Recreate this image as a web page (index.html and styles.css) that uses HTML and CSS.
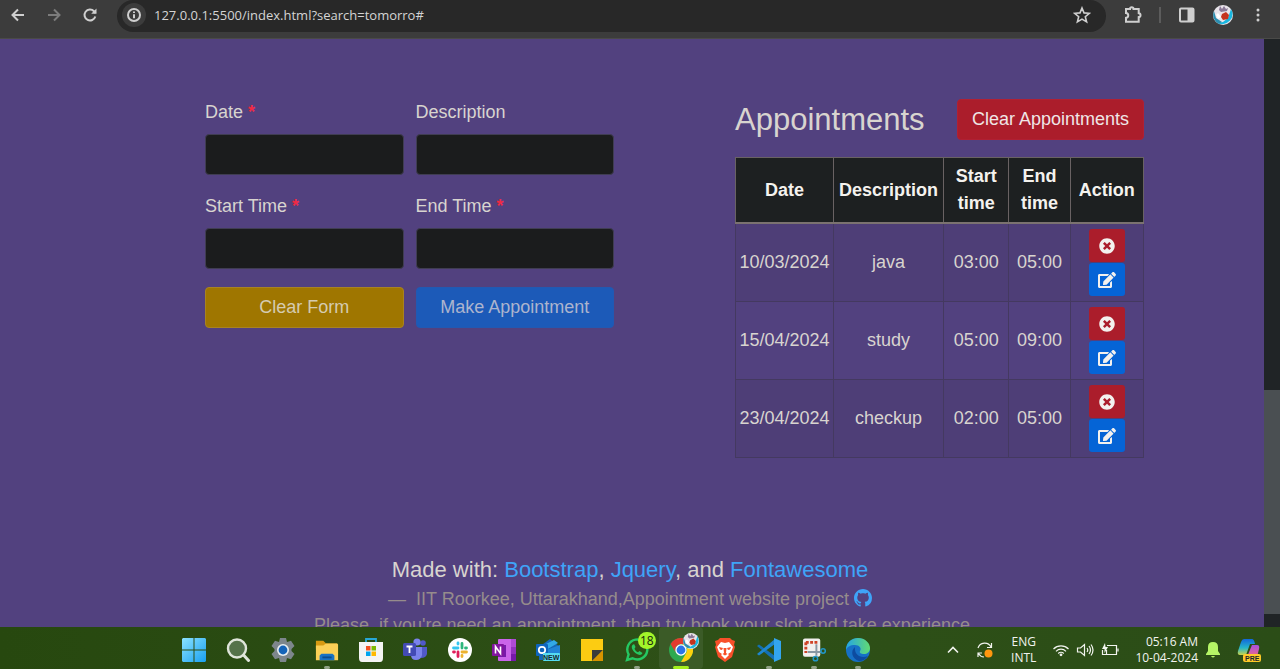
FILE: index.html
```html
<!DOCTYPE html>
<html lang="en">
<head>
<meta charset="utf-8">
<meta name="viewport" content="width=device-width, initial-scale=1">
<title>Appointments</title>
<link rel="stylesheet" href="styles.css">
</head>
<body>
<svg class="defs" aria-hidden="true">
  <symbol id="i-x" viewBox="0 0 512 512"><path fill="currentColor" d="M256 8C119 8 8 119 8 256s111 248 248 248 248-111 248-248S393 8 256 8zm121.600 313.100c4.700 4.700 4.700 12.300 0 17L338 377.600c-4.700 4.700-12.300 4.700-17 0L256 312l-65.100 65.600c-4.700 4.700-12.300 4.700-17 0L134.400 338c-4.700-4.700-4.700-12.300 0-17l65.600-65-65.600-65.100c-4.700-4.700-4.700-12.300 0-17l39.600-39.600c4.700-4.700 12.300-4.700 17 0l65 65.700 65.100-65.600c4.700-4.700 12.300-4.700 17 0l39.600 39.600c4.700 4.700 4.700 12.300 0 17L312 256l65.600 65.100z"/></symbol>
  <symbol id="i-edit" viewBox="0 0 576 512"><path fill="currentColor" d="M402.600 83.200l90.200 90.200c3.800 3.800 3.800 10 0 13.800L274.400 405.600l-92.800 10.300c-12.400 1.400-22.900-9.100-21.500-21.500l10.300-92.800L388.800 83.200c3.800-3.800 10-3.800 13.800 0zm162-22.900l-48.800-48.800c-15.200-15.200-39.900-15.200-55.200 0l-35.400 35.400c-3.800 3.800-3.800 10 0 13.800l90.200 90.200c3.800 3.800 10 3.800 13.800 0l35.400-35.400c15.200-15.300 15.200-40 0-55.200zM384 346.200V448H64V128h229.800c3.200 0 6.200-1.300 8.500-3.500l40-40c7.600-7.600 2.200-20.500-8.500-20.500H48C21.500 64 0 85.500 0 112v352c0 26.500 21.500 48 48 48h352c26.500 0 48-21.500 48-48V306.200c0-10.700-12.900-16-20.500-8.500l-40 40c-2.200 2.300-3.500 5.300-3.500 8.500z"/></symbol>
  <symbol id="i-avatar" viewBox="0 0 20 20"><circle cx="10" cy="10" r="10" fill="#e9e4ea"/><path d="M18 4a10 10 0 0 1-13 14l5-1 5-4z" fill="#18b7e0"/><path d="M1 6a10 10 0 0 0 5 13l3-2-6-4z" fill="#2b8eb0"/><path d="M4 3l2 2 1-4 2 3 2-3 2 3 2-1-1 3-6 1z" fill="#8a7896"/><path d="M9 9l4-2 3 3-1 4-5 1-2-3z" fill="#c4331f"/><path d="M5 8l3 4-3 2-2-4z" fill="#fff"/></symbol>
</svg>

<header class="chrome">
  <nav class="chrome-nav">
    <button class="icon-btn" aria-label="Back"><svg viewBox="0 0 16 16" width="16" height="16"><path d="M14 8H3M8 2.500 2.500 8 8 13.500" class="ln"/></svg></button>
    <button class="icon-btn dim" aria-label="Forward"><svg viewBox="0 0 16 16" width="16" height="16"><path d="M2 8h11M8 2.500 13.500 8 8 13.500" class="ln"/></svg></button>
    <button class="icon-btn" aria-label="Reload"><svg viewBox="0 0 16 16" width="16" height="16"><path d="M13.300 9.500A5.500 5.500 0 1 1 12 4.200L13.500 6" class="ln"/><path d="M14.500 1.500v5.300H9.200z" fill="currentColor"/></svg></button>
  </nav>
  <div class="omnibox">
    <button class="info" aria-label="Site information"><svg viewBox="0 0 16 16" width="16" height="16"><circle cx="8" cy="8" r="6" class="ln"/><path d="M8 7.200v4M8 4.400v1.600" class="ln"/></svg></button>
    <input class="url" type="text" aria-label="Address" value="127.0.0.1:5500/index.html?search=tomorro#">
    <button class="icon-btn" aria-label="Bookmark"><svg viewBox="0 0 18 18" width="18" height="18"><path d="M9 2l2 4.900 5.300.4-4 3.400 1.300 5.200L9 13.100l-4.600 2.800 1.300-5.200-4-3.400L7 6.900z" class="ln thin"/></svg></button>
  </div>
  <div class="chrome-tools">
    <button class="icon-btn" aria-label="Extensions"><svg viewBox="0 0 18 18" width="18" height="18"><path d="M2 3h4c0-2.200 3.500-2.200 3.500 0h5.200v4.200c2.400.2 2.400 3.700 0 3.900v4.700H2v-4c3-.4 3-4.400 0-4.800z" class="ln"/></svg></button>
    <span class="divider"></span>
    <button class="icon-btn" aria-label="Side panel"><svg viewBox="0 0 18 18" width="18" height="18"><rect x="2" y="2.500" width="13.500" height="13" rx="1" class="ln"/><path d="M9.500 2.500h6v13h-6z" fill="currentColor"/></svg></button>
    <button class="icon-btn" aria-label="Profile"><svg width="20" height="20"><use href="#i-avatar"/></svg></button>
    <button class="icon-btn menu" aria-label="Menu"><svg viewBox="0 0 4 16" width="4" height="16" fill="currentColor"><circle cx="2" cy="3" r="1.500"/><circle cx="2" cy="8" r="1.500"/><circle cx="2" cy="13" r="1.500"/></svg></button>
  </div>
</header>

<div class="viewport">
  <div class="page">
    <main class="columns">
      <form class="form">
        <div class="field"><label for="date">Date <span class="req">*</span></label><input id="date" type="text"></div>
        <div class="field"><label for="desc">Description</label><input id="desc" type="text"></div>
        <div class="field"><label for="start">Start Time <span class="req">*</span></label><input id="start" type="text"></div>
        <div class="field"><label for="end">End Time <span class="req">*</span></label><input id="end" type="text"></div>
        <button type="reset" class="btn btn-warning">Clear Form</button>
        <button type="button" class="btn btn-primary">Make Appointment</button>
      </form>
      <section>
        <div class="list-head">
          <h2>Appointments</h2>
          <button class="btn btn-danger">Clear Appointments</button>
        </div>
        <table class="table">
          <colgroup><col class="c-date"><col class="c-desc"><col class="c-start"><col class="c-end"><col class="c-act"></colgroup>
          <thead><tr><th>Date</th><th>Description</th><th>Start time</th><th>End time</th><th>Action</th></tr></thead>
          <tbody>
            <tr><td>10/03/2024</td><td>java</td><td>03:00</td><td>05:00</td><td><div class="actions"><button class="act del" aria-label="Delete"><svg width="16" height="16"><use href="#i-x"/></svg></button><button class="act edit" aria-label="Edit"><svg width="18" height="16"><use href="#i-edit"/></svg></button></div></td></tr>
            <tr><td>15/04/2024</td><td>study</td><td>05:00</td><td>09:00</td><td><div class="actions"><button class="act del" aria-label="Delete"><svg width="16" height="16"><use href="#i-x"/></svg></button><button class="act edit" aria-label="Edit"><svg width="18" height="16"><use href="#i-edit"/></svg></button></div></td></tr>
            <tr><td>23/04/2024</td><td>checkup</td><td>02:00</td><td>05:00</td><td><div class="actions"><button class="act del" aria-label="Delete"><svg width="16" height="16"><use href="#i-x"/></svg></button><button class="act edit" aria-label="Edit"><svg width="18" height="16"><use href="#i-edit"/></svg></button></div></td></tr>
          </tbody>
        </table>
      </section>
    </main>
    <footer class="credits">
      <p class="made">Made with: <a href="#">Bootstrap</a>, <a href="#">Jquery</a>, and <a href="#">Fontawesome</a></p>
      <p class="source">—&nbsp; IIT Roorkee, Uttarakhand,Appointment website project <a href="#" aria-label="GitHub"><svg class="gh" viewBox="0 0 16 16" width="18" height="18"><path fill="currentColor" d="M8 0C3.580 0 0 3.580 0 8c0 3.540 2.290 6.530 5.470 7.590.4.070.55-.17.55-.38 0-.19-.01-.82-.01-1.490-2.010.37-2.530-.49-2.690-.94-.09-.23-.48-.94-.82-1.130-.28-.15-.68-.52-.01-.53.63-.01 1.080.58 1.230.82.72 1.210 1.870.87 2.330.66.070-.52.28-.87.51-1.070-1.780-.2-3.640-.89-3.640-3.950 0-.87.31-1.590.82-2.150-.08-.2-.36-1.020.08-2.120 0 0 .67-.21 2.200.82.64-.18 1.320-.27 2-.27s1.360.09 2 .27c1.530-1.040 2.200-.82 2.200-.82.44 1.100.16 1.920.08 2.120.51.56.82 1.270.82 2.150 0 3.070-1.870 3.750-3.650 3.950.29.25.54.73.54 1.480 0 1.070-.01 1.930-.01 2.200 0 .21.15.46.55.38A8 8 0 0 0 16 8c0-4.420-3.580-8-8-8z"/></svg></a></p>
      <p class="source note">Please, if you're need an appointment, then try book your slot and take experience</p>
    </footer>
  </div>
  <div class="scroll"><div class="thumb"></div></div>
</div>

<footer class="taskbar">
  <nav class="apps">
    <button class="app" aria-label="Start"><svg viewBox="0 0 24 24"><defs><linearGradient id="g-win" x2="1" y2="1"><stop stop-color="#8be3ff"/><stop offset="1" stop-color="#189ff0"/></linearGradient></defs><path fill="url(#g-win)" d="M1 0h10.500v11.500H0V1zM12.500 0H23l1 1v10.500H12.500zM0 12.500h11.500V24H1l-1-1zM12.500 12.500H24V23l-1 1H12.500z"/></svg></button>
    <button class="app" aria-label="Search"><svg viewBox="0 0 24 24"><circle cx="11" cy="10.500" r="9" fill="#55724a" stroke="#dfe5da" stroke-width="2.400"/><path d="M17.500 17l5 5.500" stroke="#dfe5da" stroke-width="3" stroke-linecap="round"/></svg></button>
    <button class="app" aria-label="Settings"><svg viewBox="0 0 24 24"><path fill="#7d868c" d="M9 0h6l1 4 4-1.200 3.500 5.200-3 3v2l3 3L20 21.200 16 20l-1 4H9l-1-4-4 1.200L.5 16l3-3v-2l-3-3L4 2.800 8 4z"/><circle cx="12" cy="12" r="6" fill="#e8eef2"/><circle cx="12" cy="12" r="4.400" fill="#1463b8"/></svg></button>
    <button class="app open" aria-label="File Explorer"><svg viewBox="0 0 26 24"><path fill="#d79a12" d="M1 2h8l3 3h12v6H1z"/><path fill="#fbd057" d="M1 7h8l3-2h12l1 1v17H1z"/><path fill="#1a73c4" d="M5 23v-5l2-2h12l2 2v5z"/><path d="M8 20h10" stroke="#0b4d8e" stroke-width="2"/></svg></button>
    <button class="app" aria-label="Store"><svg viewBox="0 0 24 24"><path d="M7 6V1h10v5" fill="none" stroke="#27a8d8" stroke-width="1.800"/><path fill="#f4f4f4" d="M0 4h24v16q0 4-3 4H3q-3 0-3-4z"/><path fill="#f25022" d="M7 8h4.500v4.500H7z"/><path fill="#7fba00" d="M12.500 8H17v4.500h-4.500z"/><path fill="#00a4ef" d="M7 13.500h4.500V18H7z"/><path fill="#ffb900" d="M12.500 13.500H17V18h-4.500z"/></svg></button>
    <button class="app" aria-label="Teams"><svg viewBox="0 0 24 24"><circle cx="20" cy="5" r="2.800" fill="#5059c9"/><circle cx="14" cy="4" r="3.600" fill="#7b83eb"/><path fill="#5059c9" d="M16 9h8v7q-1 4-6 4z"/><path fill="#7b83eb" d="M8 9h11v8q-1 5-6 5t-5-5z"/><rect y="5" width="13" height="13" rx="1.500" fill="#434bb4"/><path d="M3.500 8.500h6M6.500 8.500v6.500" stroke="#fff" stroke-width="1.800"/></svg></button>
    <button class="app" aria-label="Slack"><svg viewBox="0 0 24 24"><circle cx="12" cy="12" r="12" fill="#fff"/><g stroke-width="2.800" stroke-linecap="round"><path stroke="#36c5f0" d="M5.500 10h4.500M10 5v1"/><path stroke="#2eb67d" d="M14 5.500V10M18.500 10h-1"/><path stroke="#ecb22e" d="M14 14h4.500M14 18.500v-1"/><path stroke="#e01e5a" d="M10 14v4.500M5.500 14h1"/></g></svg></button>
    <button class="app" aria-label="OneNote"><svg viewBox="0 0 24 24"><rect x="6" y="1" width="18" height="22" rx="1" fill="#ca64ea"/><path fill="#ae4bd5" d="M19 1h5v8h-5z"/><path fill="#9332bf" d="M19 9h5v7h-5z"/><path fill="#7719aa" d="M19 16h5v7h-5zM6 7h8v12H6z"/><rect y="6" width="12" height="12" rx="1" fill="#80169f"/><path d="M3.500 15.500v-7l5 7v-7" fill="none" stroke="#fff" stroke-width="1.600"/></svg></button>
    <button class="app" aria-label="Outlook"><svg viewBox="0 0 24 24"><path fill="#1667b7" d="M3 9L14 1l10 8v13H3z"/><path fill="#32a9e7" d="M8 7l10-5 4 3-12 7z"/><path fill="#2184d6" d="M10 12l14-5v14H8z"/><rect y="6" width="12" height="12" rx="1" fill="#0f65bd"/><circle cx="6" cy="12" r="3.200" fill="none" stroke="#fff" stroke-width="1.700"/><rect x="7" y="15" width="17" height="8" rx="1" fill="#55dcf2"/><text x="7" y="22" class="tag">NEW</text></svg></button>
    <button class="app" aria-label="Sticky Notes"><svg viewBox="0 0 24 24"><path fill="#fccc12" d="M1 1h22v11L12 23H1z"/><path fill="#3b3b3b" d="M12 12h11L12 23z"/><path fill="#d79400" d="M23 12v11H12z"/></svg></button>
    <button class="app open" aria-label="WhatsApp"><svg viewBox="0 0 24 24"><path d="M2 22l1.600-5.600a10 10 0 1 1 4 3.900z" fill="none" stroke="#25c862" stroke-width="2.400"/><path fill="#25c862" d="M8 6.500c-3 2 0 7 3 9s5.500 2 6.500-.5l-3-2-1.500 1.300c-1.500-.5-3-2-3.500-3.500L10.500 9 9.200 6.300z"/></svg><span class="badge">18</span></button>
    <button class="app open active" aria-label="Chrome"><svg viewBox="0 0 24 24"><circle cx="12" cy="12" r="12" fill="#2da94f"/><path fill="#e33b2e" d="M1.600 6A12 12 0 0 1 22.400 6H12a6 6 0 0 0-5 9z"/><path fill="#fdd10d" d="M22.400 6A12 12 0 0 1 12 24l5.200-9A6 6 0 0 0 12 6z"/><circle cx="12" cy="12" r="5.700" fill="#fff"/><circle cx="12" cy="12" r="4.400" fill="#2b74e8"/></svg><svg class="mini"><use href="#i-avatar"/></svg></button>
    <button class="app" aria-label="Brave"><svg viewBox="0 0 24 24"><path fill="#f8502a" d="M7 0h10l2 2 3 1-1 4 1 2-3 10-7 5-7-5L2 9l1-2-1-4 3-1z"/><path fill="#fff" d="M8 4l4 1 4-1 4 5-2 5-3 2 1 1-4 4-4-4 1-1-3-2-2-5z"/><path fill="#f8502a" d="M6 9l4 1-1 2-2-.5zM18 9l-4 1 1 2 2-.5zM10.500 10h3l-.5 5 1.500 1L12 17.500 9.500 16l1.500-1z"/></svg></button>
    <button class="app open" aria-label="Visual Studio Code"><svg viewBox="0 0 24 24"><path fill="#1470b3" d="M0 8l2-1.500L18 18v5z"/><path fill="#1f87d0" d="M0 16l2 1.500L18 6V1z"/><path fill="#33a5ef" d="M17 0l7 3v18l-7 3z"/></svg></button>
    <button class="app open" aria-label="Snipping Tool"><svg viewBox="0 0 25 24"><rect x="1" y="0" width="18" height="19" rx="2" fill="#f2f0ee"/><path d="M4 4h12M4 4v11" stroke="#cf4327" stroke-width="3" stroke-dasharray="3 1.500"/><path d="M15 6v12M6 14h14" stroke="#8997a3" stroke-width="2"/><circle cx="22" cy="13" r="2.300" fill="none" stroke="#2296c8" stroke-width="1.600"/><circle cx="14" cy="21" r="2.300" fill="none" stroke="#2296c8" stroke-width="1.600"/></svg></button>
    <button class="app open" aria-label="Edge"><svg viewBox="0 0 24 24"><defs><linearGradient id="g-edge" x2="1"><stop stop-color="#24a4e5"/><stop offset="1" stop-color="#62db72"/></linearGradient></defs><circle cx="12" cy="12" r="12" fill="#1670c6"/><path fill="url(#g-edge)" d="M0 12C0 4 6 0 12 0c7 0 12 5 12 10 0 4-3 6-6 6s-5-1-4-3c2-3-1-6-5-6-5 0-8 2-9 5z"/><path fill="#0d4ba0" d="M9 9c-5 4-3 12 4 14 4 0 7-2 9-5-7 3-14-1-13-9z"/></svg></button>
  </nav>
  <div class="tray">
    <button class="tray-btn" aria-label="Hidden icons"><svg viewBox="0 0 12 12" width="12" height="12"><path d="M1 8.500L6 3.500l5 5" class="ln thin"/></svg></button>
    <button class="tray-btn sync" aria-label="Updates"><svg viewBox="0 0 18 18" width="18" height="18"><path d="M2 7a7 7 0 0 1 13-1M15.500 2v4.500H11M8 16a7 7 0 0 1-5.500-3.500M2 16v-4h4" class="ln hair"/><circle cx="12.500" cy="12.500" r="4" fill="#ff970f"/></svg></button>
    <button class="tray-btn lang">ENG<br>INTL</button>
    <button class="tray-btn status" aria-label="Network, sound and battery">
      <svg viewBox="0 0 16 16" width="16" height="16"><path d="M.5 7a10.500 10.500 0 0 1 15 0M3 9.300a7 7 0 0 1 10 0M5.200 11.500a4 4 0 0 1 5.600 0" class="ln hair"/><circle cx="8" cy="12.800" r="1.400" fill="currentColor"/></svg>
      <svg viewBox="0 0 18 16" width="18" height="16"><path d="M1.500 6h3l4-3.500v11l-4-3.500h-3zM11 6q1.500 2 0 4M13 4q3 4 0 8M15 2.500q4 5.500 0 11" class="ln hair"/></svg>
      <svg viewBox="0 0 18 16" width="18" height="16"><path d="M6 3.500h9.500v9H5M1.500 8v4.500h4V8M17 6.500v3" class="ln hair"/><path d="M4 1L1 7h2.500v4L7 5H4.500z" fill="currentColor"/></svg>
    </button>
    <button class="tray-btn clock">05:16 AM<br>10-04-2024</button>
    <button class="tray-btn bell" aria-label="Notifications"><svg viewBox="0 0 14 16" width="14" height="16"><path fill="#b5f566" d="M7 0q5 0 5 5v4l2 3v1H0v-1l2-3V5q0-5 5-5zM5 14h4q-2 3-4 0z"/></svg></button>
    <button class="tray-btn copilot" aria-label="Copilot"><svg viewBox="0 0 24 24" width="24" height="24"><defs><linearGradient id="g-cp" x2="0" y2="1"><stop stop-color="#1266dc"/><stop offset=".55" stop-color="#25b5ca"/><stop offset="1" stop-color="#c9d348"/></linearGradient><linearGradient id="g-cp2" x2="0" y2="1"><stop stop-color="#a84fe0"/><stop offset="1" stop-color="#f16a82"/></linearGradient></defs><path fill="url(#g-cp)" d="M7 1h8q2 0 3 5h-5L9 17H3q-3 0-2-4L4 4q1-3 3-3z"/><path fill="url(#g-cp2)" d="M15 7h5q3 0 2 4l-2 8H10z"/><rect x="6" y="16" width="18" height="8" rx="2" fill="#ffc928"/><text x="8" y="23" class="tag">PRE</text></svg></button>
  </div>
</footer>
</body>
</html>
```

FILE: styles.css
```css
* { box-sizing: border-box; }
body {
  margin: 0;
  height: 100vh;
  display: flex;
  flex-direction: column;
  overflow: hidden;
  background: #52417f;
  color: #d8d4cf;
  font: 18px/27px "Liberation Sans", Arial, sans-serif;
}
button, input { font: inherit; color: inherit; margin: 0; padding: 0; border: 0; background: none; }
svg { display: block; flex: none; }
a { color: #3fa4f8; text-decoration: none; }
.defs { position: absolute; width: 0; height: 0; }
.ln { fill: none; stroke: currentColor; stroke-width: 2; }
.thin { stroke-width: 1.6; }
.hair { stroke-width: 1.2; }

/* Browser toolbar */
.chrome {
  display: flex;
  align-items: flex-start;
  flex: none;
  height: 39px;
  padding-left: 10px;
  background: #3c3c3c;
  border-bottom: 1px solid #4a4a48;
  color: #cfcfcf;
}
.chrome-nav, .chrome-tools { display: flex; align-items: center; height: 30px; }
.chrome-nav { gap: 20px; width: 107px; }
.chrome-tools { width: 174px; padding-left: 18px; gap: 17px; }
.icon-btn { display: flex; }
.menu { margin-left: 6px; }
.dim { color: #7c7c7c; }
.divider { width: 2px; height: 16px; background: #5c5c5c; }
.omnibox {
  flex: 1;
  display: flex;
  align-items: center;
  height: 32px;
  padding: 0 15px 2px 5px;
  border-radius: 16px;
  background: #282828;
}
.info { display: flex; padding: 4px; border-radius: 50%; background: #3c3c3c; }
.url { flex: 1; margin-left: 8px; font: 13px/20px "Open Sans", "Noto Sans", sans-serif; color: #d4d4d4; outline: 0; }

/* Page */
.viewport { flex: 1; min-height: 0; display: flex; }
.page { flex: 1; overflow: hidden; padding-top: 60px; }
.scroll { width: 16px; background: #202426; display: flex; flex-direction: column; justify-content: flex-end; padding-bottom: 13px; }
.thumb { height: 39%; background: #4a4f52; }
.columns { display: grid; grid-template-columns: 1fr 1fr; column-gap: 121px; padding: 0 120px 0 205px; }
.form { display: grid; grid-template-columns: 1fr 1fr; column-gap: 12px; row-gap: 18px; align-content: start; }
.field { display: flex; flex-direction: column; gap: 8px; }
.field input { width: 100%; height: 41px; padding: 0 12px; border: 1px solid #403d52; border-radius: 4px; background: #1b1c1d; }
.req { color: #ef2a45; font-weight: 700; }
.btn { height: 41px; padding: 0 14px; border: 1px solid; border-radius: 4px; white-space: nowrap; }
.btn-warning { background: #9f7600; border-color: #a88321; color: #d5cbb0; }
.btn-primary { background: #1c5ab8; border-color: #2159b2; color: #acb4ce; }
.btn-danger { background: #ab1d2b; border-color: #b02033; color: #efe6e6; }
.list-head { display: flex; justify-content: space-between; align-items: center; margin-bottom: 17px; }
h2 { margin: 0; font-size: 31px; line-height: 41px; font-weight: 400; }

.table { width: 100%; table-layout: fixed; border-collapse: collapse; text-align: center; }
.c-date { width: 24%; }
.c-desc { width: 27%; }
.c-start { width: 16%; }
.c-end { width: 15%; }
.c-act { width: 18%; }
.table th { padding: 5px 3px; background: #1d2021; color: #f4f2ee; border: 1px solid #696263; border-bottom: 2px solid #7b7270; }
.table td { height: 78px; padding: 5px 3px; border: 1px solid #443960; }
.table tbody tr:nth-child(odd) { background: #4e3e77; }
.actions { display: flex; flex-direction: column; align-items: center; gap: 1px; }
.act { display: flex; align-items: center; justify-content: center; width: 36px; height: 33px; border-radius: 3px; color: #f3f1ee; }
.del { background: #ab1d2b; }
.edit { background: #0564d6; }

.credits { padding: 95px 4px 0 0; text-align: center; white-space: nowrap; }
.credits p { margin: 0; }
.made { font-size: 22px; line-height: 33px; }
.source { color: #968c8c; line-height: 26px; }
.note { padding-left: 24px; }
.gh { display: inline-block; vertical-align: -2px; }

/* Taskbar */
.taskbar {
  flex: none;
  display: flex;
  justify-content: space-between;
  height: 42px;
  padding-left: 172px;
  background: linear-gradient(90deg, #27480f, #2e5017 55%, #2b4d17);
  color: #f2f4ef;
}
.apps { display: grid; grid-template-columns: repeat(16, 1fr); width: 708px; }
.app { position: relative; display: flex; align-items: center; justify-content: center; padding-top: 4px; }
.app svg { width: 24px; height: 24px; }
.open::after { content: ""; position: absolute; bottom: 0; left: 50%; width: 6px; height: 3px; margin-left: -3px; border-radius: 2px; background: #91a286; }
.active { background: #3b5b27; border-radius: 4px; }
.active::after { width: 16px; margin-left: -8px; background: #a4f01c; }
.badge { position: absolute; top: 5px; right: 3px; width: 18px; height: 17px; border-radius: 9px; background: #a3f52a; color: #17230d; font: 12px/17px "Open Sans", sans-serif; }
.app .mini { position: absolute; top: 6px; right: 4px; width: 16px; height: 16px; }
.tag { font: bold 7px "Liberation Sans", sans-serif; fill: #17262c; }
.tray { display: flex; align-items: center; padding: 4px 19px 0 0; font: 12px/16px "Open Sans", "Noto Sans", sans-serif; }
.tray-btn { display: flex; }
.sync { margin-left: 17px; }
.lang { display: block; margin-left: 17px; }
.status { gap: 7px; margin-left: 17px; }
.clock { display: block; margin-left: 16px; text-align: right; }
.bell { margin-left: 8px; }
.copilot { margin-left: 17px; }
```
